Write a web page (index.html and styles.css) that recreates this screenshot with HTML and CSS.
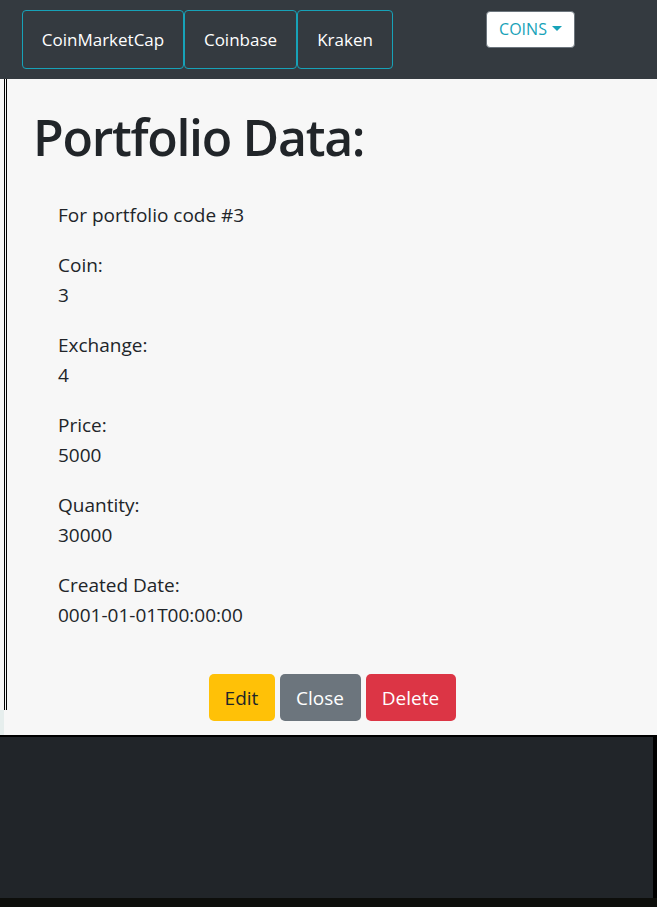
FILE: index.html
```html
<!DOCTYPE html>
<html lang="en">
<head>
<meta charset="utf-8">
<title>Portfolio Data</title>
<link rel="stylesheet" href="styles.css">
</head>
<body>
<nav class="topbar">
  <div class="btn-group">
    <a class="nav-btn">CoinMarketCap</a>
    <a class="nav-btn">Coinbase</a>
    <a class="nav-btn">Kraken</a>
  </div>
  <button class="dropdown">COINS<span class="caret"></span></button>
</nav>
<div class="page">
  <div class="rail">
    <div class="rail-line"></div>
    <div class="rail-foot"></div>
  </div>
  <main class="content">
    <h1 class="title">Portfolio Data:</h1>
    <div class="data">
      <p class="row">For portfolio code #3</p>
      <p class="row">Coin:<br>3</p>
      <p class="row">Exchange:<br>4</p>
      <p class="row">Price:<br>5000</p>
      <p class="row">Quantity:<br>30000</p>
      <p class="row">Created Date:<br>0001-01-01T00:00:00</p>
    </div>
    <div class="actions">
      <button class="btn btn-edit">Edit</button>
      <button class="btn btn-close">Close</button>
      <button class="btn btn-delete">Delete</button>
    </div>
  </main>
</div>
<footer class="footer">
  <div class="footer-body"></div>
  <div class="footer-strip"></div>
</footer>
</body>
</html>
```
FILE: styles.css
```css
* { box-sizing: border-box; }
html, body { margin: 0; padding: 0; }
body {
  font-family: "Open Sans", "Noto Sans", sans-serif;
  color: #212529;
  background: #f7f7f7;
  width: 657px;
  overflow: hidden;
}
.topbar {
  height: 79px;
  background: #343a40;
  display: flex;
  align-items: flex-start;
  padding: 10px 0 0 22px;
}
.btn-group { display: flex; }
.nav-btn {
  display: flex;
  align-items: center;
  justify-content: center;
  height: 59px;
  border: 1px solid #17a2b8;
  border-radius: 4px;
  color: #fff;
  font-size: 17px;
  padding: 0 18px;
}
.nav-btn:nth-child(1) { width: 162px; }
.nav-btn:nth-child(2) { width: 113px; }
.nav-btn:nth-child(3) { width: 96px; }
.dropdown {
  margin: 1px 0 0 93px;
  height: 37px;
  width: 89px;
  background: #fff;
  border: 1px solid #6c757d;
  border-radius: 4px;
  color: #17a2b8;
  font-family: inherit;
  font-size: 16px;
  display: flex;
  align-items: center;
  justify-content: center;
  padding: 0 0 2px 0;
}
.caret {
  display: inline-block;
  margin-left: 5px;
  width: 0; height: 0;
  border-left: 5px solid transparent;
  border-right: 5px solid transparent;
  border-top: 5px solid #17a2b8;
}
.page { display: flex; height: 656px; }
.rail { width: 7px; flex-shrink: 0; display: flex; flex-direction: column; }
.rail-line { margin-left: 4px; height: 631px; border-left: 3px double #000; }
.rail-foot { width: 4px; height: 25px; background: #e6eeed; }
.content { flex: 1; padding: 28px 0 0 0; display: flex; flex-direction: column; }
.title {
  margin: 0 0 33px 26px;
  font-size: 50px;
  line-height: 60px;
  font-weight: 600;
  letter-spacing: -1.3px;
}
.data { padding-left: 51px; }
.row {
  margin: 0 0 20px 0;
  font-size: 19px;
  line-height: 30px;
}
.actions {
  margin-top: 24px;
  display: flex;
  justify-content: center;
  gap: 5px;
}
.btn {
  font-family: inherit;
  font-size: 19px;
  height: 47px;
  padding: 0 15px;
  border: none;
  border-radius: 5px;
}
.btn-edit { background: #ffc107; color: #212529; width: 66px; }
.btn-close { background: #6c757d; color: #fff; width: 81px; }
.btn-delete { background: #dc3545; color: #fff; width: 90px; }
.footer { height: 172px; border-top: 2px solid #000; display: flex; flex-direction: column; }
.footer-body { flex: 1; background: #212529; border-right: 4px solid #000; }
.footer-strip { height: 9px; background: #0d0e0b; }
```
